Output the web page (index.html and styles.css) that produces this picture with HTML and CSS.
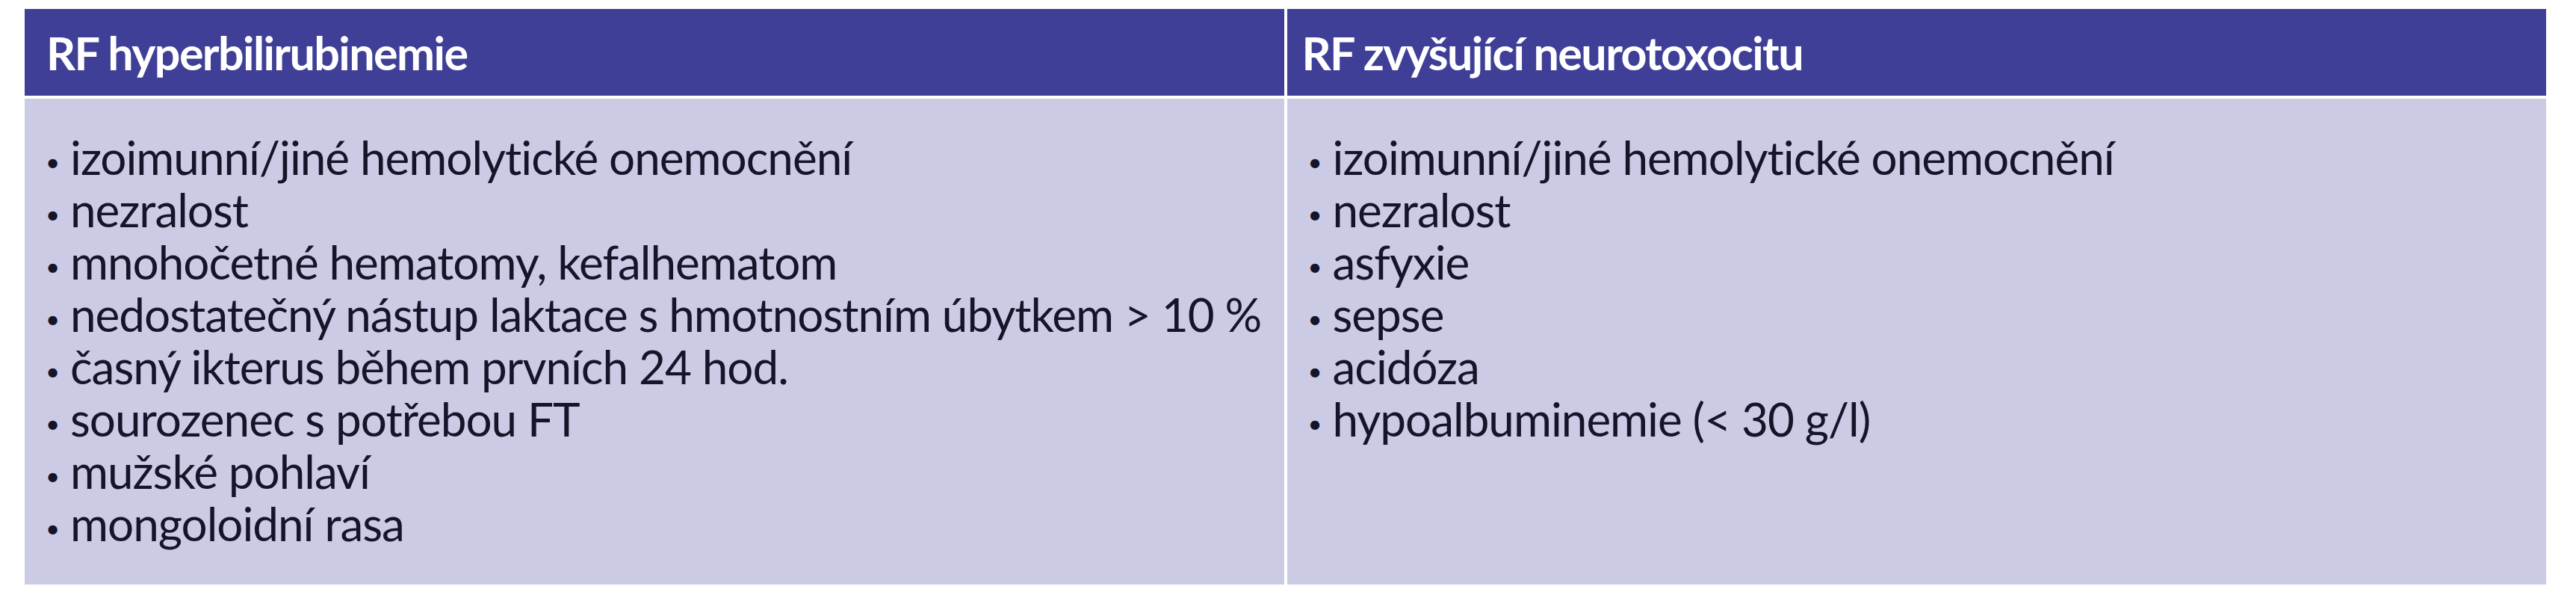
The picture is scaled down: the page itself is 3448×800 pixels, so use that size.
FILE: index.html
```html
<!DOCTYPE html>
<html lang="cs">
<head>
<meta charset="utf-8">
<title>RF hyperbilirubinemie</title>
<link rel="stylesheet" href="styles.css">
</head>
<body>
<div class="rf-table">
  <div class="cell head">RF hyperbilirubinemie</div>
  <div class="cell head head-right">RF zvyšující neurotoxocitu</div>
  <div class="cell body">
    <ul class="items">
      <li><span class="dot">•</span>izoimunní/jiné hemolytické onemocnění</li>
      <li><span class="dot">•</span>nezralost</li>
      <li><span class="dot">•</span>mnohočetné hematomy, kefalhematom</li>
      <li><span class="dot">•</span>nedostatečný nástup laktace s hmotnostním úbytkem &gt; 10 %</li>
      <li><span class="dot">•</span>časný ikterus během prvních 24 hod.</li>
      <li><span class="dot">•</span>sourozenec s potřebou FT</li>
      <li><span class="dot">•</span>mužské pohlaví</li>
      <li><span class="dot">•</span>mongoloidní rasa</li>
    </ul>
  </div>
  <div class="cell body">
    <ul class="items">
      <li><span class="dot">•</span>izoimunní/jiné hemolytické onemocnění</li>
      <li><span class="dot">•</span>nezralost</li>
      <li><span class="dot">•</span>asfyxie</li>
      <li><span class="dot">•</span>sepse</li>
      <li><span class="dot">•</span>acidóza</li>
      <li><span class="dot">•</span>hypoalbuminemie (&lt; 30 g/l)</li>
    </ul>
  </div>
</div>
</body>
</html>
```

FILE: styles.css
```css
html, body {
  margin: 0;
  padding: 0;
  background: #ffffff;
}

body {
  font-family: Lato, "Open Sans", "Liberation Sans", sans-serif;
}

.rf-table {
  display: grid;
  grid-template-columns: 1fr 1fr;
  column-gap: 4px;
  row-gap: 4px;
  width: 3375px;
  margin: 12px 0 0 33px;
  background: #ffffff;
}

.cell {
  box-sizing: border-box;
}

.head {
  height: 116px;
  background: #3f3f97;
  color: #ffffff;
  font-weight: 700;
  font-size: 61px;
  letter-spacing: -1.6px;
  display: flex;
  align-items: center;
  padding: 0 29px;
  line-height: 1;
  white-space: nowrap;
}

.head-right {
  padding-left: 20px;
}

.body {
  background: #cccbe6;
  color: #15152a;
  padding: 43px 28px 47px;
}

.items {
  list-style: none;
  margin: 0;
  padding: 0;
  font-size: 62px;
  line-height: 70px;
  letter-spacing: -1px;
  white-space: nowrap;
}

.dot {
  display: inline-block;
  width: 33px;
  font-size: 33px;
  letter-spacing: 0;
  vertical-align: 5px;
  line-height: 1;
}
```
